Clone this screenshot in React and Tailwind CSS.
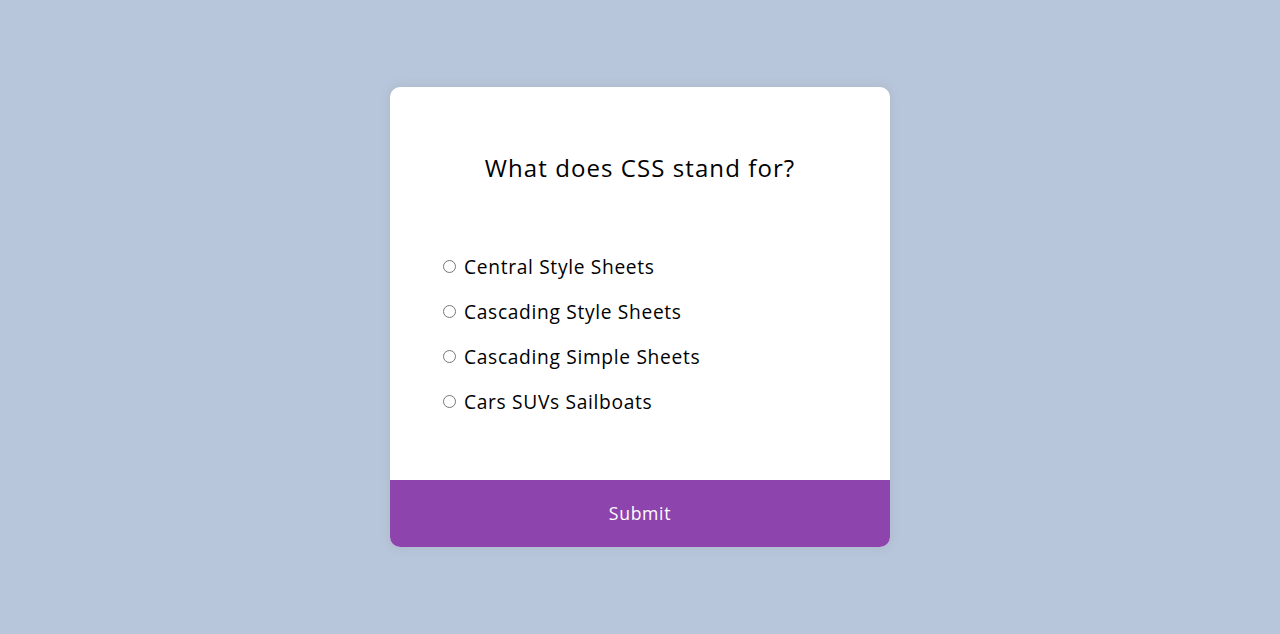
const options = [
  'Central Style Sheets',
  'Cascading Style Sheets',
  'Cascading Simple Sheets',
  'Cars SUVs Sailboats',
]

export default function App() {
  return (
    <div
      className="min-h-screen flex items-center justify-center bg-[#b8c6db]"
      style={{ fontFamily: '"Open Sans", sans-serif' }}
    >
      <div className="w-[500px] bg-white rounded-[10px] overflow-hidden shadow-[0_0_10px_2px_rgba(100,100,100,0.1)]">
        <div className="pt-[63px] pb-[64.5px] px-[53px]">
          <h2 className="text-center text-[24px] leading-[36px] tracking-[0.045em] font-medium text-black">What does CSS stand for?</h2>
          <ul className="mt-[65.5px] flex flex-col gap-4">
            {options.map((o, i) => (
              <li key={o} className="flex items-center text-[19.2px] leading-[29px] tracking-[0.035em] font-medium text-black">
                <input type="radio" name="answer" id={`a${i}`} className="w-[13px] h-[13px] m-0 mr-2" />
                <label htmlFor={`a${i}`}>{o}</label>
              </li>
            ))}
          </ul>
        </div>
        <button className="block w-full h-[67px] bg-[#8e44ad] text-white text-[17.6px] tracking-[0.04em] font-medium">Submit</button>
      </div>
    </div>
  )
}
